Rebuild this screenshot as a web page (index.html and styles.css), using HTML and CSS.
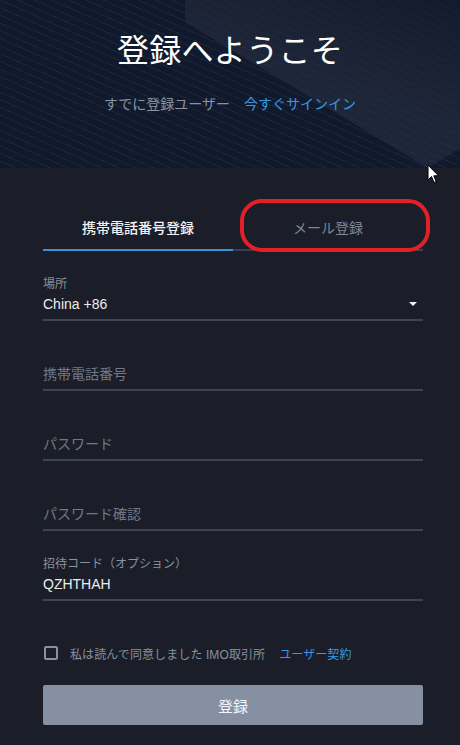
FILE: index.html
```html
<!DOCTYPE html>
<html lang="ja">
<head>
<meta charset="utf-8">
<title>登録へようこそ</title>
<link rel="stylesheet" href="styles.css">
</head>
<body>
<div class="page">
  <header class="header">
    <h1 class="title">登録へようこそ</h1>
    <p class="subtitle"><span class="muted">すでに登録ユーザー</span><a class="link" href="#">今すぐサインイン</a></p>
  </header>
  <main class="form">
    <div class="tabs">
      <div class="tab active">携帯電話番号登録</div>
      <div class="tab">メール登録</div>
    </div>
    <div class="field">
      <div class="label">場所</div>
      <div class="value select"><span>China +86</span><span class="caret"></span></div>
    </div>
    <div class="field">
      <div class="label"></div>
      <div class="value placeholder">携帯電話番号</div>
    </div>
    <div class="field">
      <div class="label"></div>
      <div class="value placeholder">パスワード</div>
    </div>
    <div class="field">
      <div class="label"></div>
      <div class="value placeholder">パスワード確認</div>
    </div>
    <div class="field">
      <div class="label">招待コード（オプション）</div>
      <div class="value">QZHTHAH</div>
    </div>
    <label class="agree">
      <span class="checkbox"></span>
      <span class="agree-text">私は読んで同意しました IMO取引所</span>
      <a class="link small" href="#">ユーザー契約</a>
    </label>
    <button class="submit" type="button">登録</button>
  </main>
  <div class="annotation"></div>
  <svg class="cursor" width="13" height="20" viewBox="0 0 13 20"><path d="M1 1 L1 16 L4.5 12.5 L7 18.5 L9.2 17.6 L6.8 11.8 L11.5 11.8 Z" fill="#ffffff" stroke="#000000" stroke-width="1"/></svg>
</div>
</body>
</html>
```
FILE: styles.css
```css
* { box-sizing: border-box; }
html, body { margin: 0; padding: 0; }
body {
  width: 460px;
  height: 745px;
  overflow: hidden;
  background: #1b1e28;
  font-family: "Liberation Sans", "Noto Sans CJK JP", sans-serif;
}
.page { position: relative; width: 460px; height: 745px; }

.header {
  position: relative;
  height: 168px;
  overflow: hidden;
  background: #111a2d;
  text-align: center;
  padding-top: 29px;
}
.header::before {
  content: "";
  position: absolute;
  inset: 0;
  background: repeating-linear-gradient(24deg, rgba(255,255,255,0) 0 6px, rgba(150,170,200,0.08) 6px 7px);
}
.header::after {
  content: "";
  position: absolute;
  inset: 0;
  background: linear-gradient(200deg, rgba(20,26,42,0.6) 0%, rgba(40,48,66,0.55) 40%, rgba(45,52,70,0.45) 100%);
  clip-path: polygon(185px 0, 460px 0, 460px 148px, 428px 168px, 185px 22px);
}
.title {
  position: relative;
  z-index: 1;
  margin: 0;
  font-size: 32px;
  line-height: 44px;
  font-weight: 400;
  color: #ffffff;
  letter-spacing: 0.3px;
}
.subtitle {
  position: relative;
  z-index: 1;
  margin: 21px 0 0;
  font-size: 14px;
  line-height: 20px;
}
.muted { color: #8b93a3; }
.link { color: #3b97e3; text-decoration: none; margin-left: 14px; }

.form { padding: 0 37px 0 43px; }
.tabs { display: flex; margin-top: 39px; }
.tab {
  flex: 1;
  height: 44px;
  line-height: 42px;
  text-align: center;
  font-size: 14px;
  color: #7d8596;
  border-bottom: 2px solid #3a4050;
}
.tab.active {
  color: #f2f2f2;
  font-weight: 500;
  border-bottom-color: #3b8fd6;
}

.field {
  margin-top: 24px;
  padding-bottom: 4px;
  border-bottom: 2px solid #3d4456;
}
.label {
  height: 18px;
  line-height: 18px;
  font-size: 12px;
  color: #8a919e;
}
.value {
  height: 22px;
  line-height: 22px;
  font-size: 14px;
  color: #ececec;
}
.value.placeholder { color: #70778a; }
.select { display: flex; justify-content: space-between; align-items: center; }
.caret {
  width: 0;
  height: 0;
  margin-right: 6px;
  border-left: 4px solid transparent;
  border-right: 4px solid transparent;
  border-top: 4px solid #f0f0f0;
}

.agree {
  display: flex;
  align-items: center;
  height: 20px;
  margin-top: 42px;
  font-size: 12px;
}
.checkbox {
  width: 14px;
  height: 14px;
  margin-left: 1px;
  border: 2px solid #8a90a0;
  border-radius: 2px;
  flex: none;
}
.agree-text { color: #8a919e; margin-left: 12px; letter-spacing: 0.1px; }
.link.small { margin-left: 14px; font-size: 12px; letter-spacing: 0.1px; }

.submit {
  display: block;
  width: 100%;
  height: 40px;
  margin-top: 22px;
  border: 0;
  border-radius: 2px;
  background: #8591a3;
  color: #f4f6f8;
  font-family: "Liberation Sans", "Noto Sans CJK JP", sans-serif;
  font-size: 15px;
}

.annotation {
  position: absolute;
  left: 240px;
  top: 199px;
  width: 190px;
  height: 53px;
  border: 4px solid #e3202a;
  border-radius: 22px;
}
.cursor {
  position: absolute;
  left: 427px;
  top: 164px;
}
```
